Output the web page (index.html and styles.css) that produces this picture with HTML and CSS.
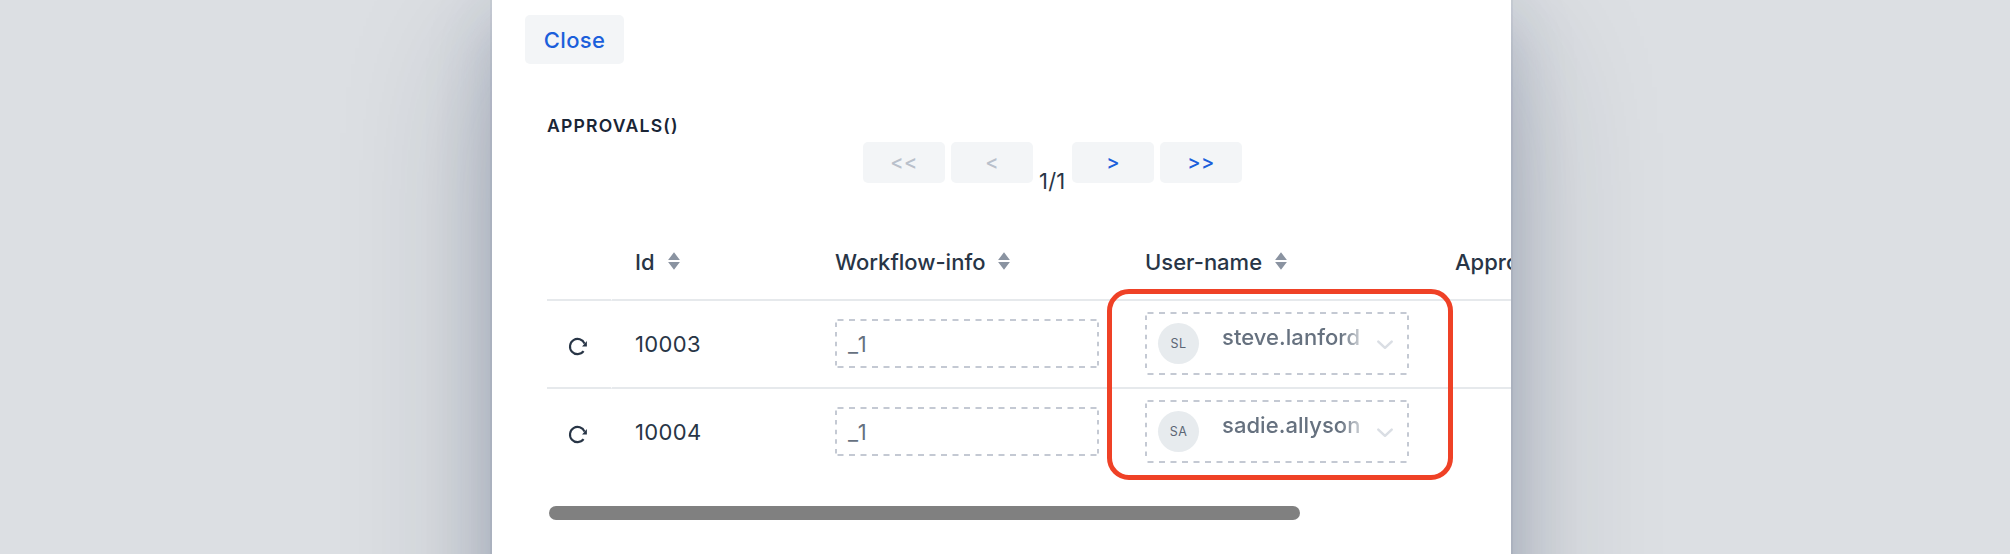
FILE: index.html
```html
<!DOCTYPE html>
<html lang="en">
<head>
<meta charset="utf-8">
<title>Approvals</title>
<link rel="stylesheet" href="styles.css">
</head>
<body>
<svg class="symbols" aria-hidden="true">
  <symbol id="reload" viewBox="0 0 20 20"><path d="M15.6 14.2A7.6 7.6 0 1 1 16.6 6.6" fill="none" stroke="currentColor" stroke-width="2.1"/><path d="M18.9 4v5.6h-4.8z" fill="currentColor"/></symbol>
  <symbol id="sort" viewBox="0 0 12 18"><path d="M6 0.3 11.9 7.9H.1zM.1 10.1h11.8L6 17.7z" fill="currentColor"/></symbol>
  <symbol id="chevron" viewBox="0 0 18 12"><path d="M2.3 2.6 9 8.8l6.7-6.2" fill="none" stroke="currentColor" stroke-width="2.5" stroke-linecap="round" stroke-linejoin="round"/></symbol>
</svg>
<div class="backdrop">
<main class="dialog">
  <button class="button close">Close</button>
  <section class="content">
    <h2 class="title">APPROVALS()</h2>
    <nav class="pager">
      <button class="button page" disabled>&lt;&lt;</button>
      <button class="button page" disabled>&lt;</button>
      <span class="count">1/1</span>
      <button class="button page">&gt;</button>
      <button class="button page">&gt;&gt;</button>
    </nav>
    <div class="grid">
      <div class="row head">
        <div class="cell first"></div>
        <div class="cell id">Id<svg class="sort"><use href="#sort"/></svg></div>
        <div class="cell">Workflow-info<svg class="sort"><use href="#sort"/></svg></div>
        <div class="cell">User-name<svg class="sort"><use href="#sort"/></svg></div>
        <div class="cell">Appro</div>
      </div>
      <div class="row">
        <div class="cell first"><svg class="reload"><use href="#reload"/></svg></div>
        <div class="cell id">10003</div>
        <div class="cell"><div class="field text"><svg class="outline" viewBox="0 0 264 49"><path class="h" d="M2.5 1h259M2.5 48h259"/><path class="v" d="M1 3.5v43M263 3.5v43"/></svg>_1</div></div>
        <div class="cell"><div class="field user"><svg class="outline" viewBox="0 0 264 63"><path class="h" d="M2.5 1h259M2.5 62h259"/><path class="v" d="M1 3.5v57M263 3.5v57"/></svg><span class="avatar">SL</span><span class="name">steve.lanford</span><svg class="chevron"><use href="#chevron"/></svg></div></div>
        <div class="cell"></div>
      </div>
      <div class="row">
        <div class="cell first"><svg class="reload"><use href="#reload"/></svg></div>
        <div class="cell id">10004</div>
        <div class="cell"><div class="field text"><svg class="outline" viewBox="0 0 264 49"><path class="h" d="M2.5 1h259M2.5 48h259"/><path class="v" d="M1 3.5v43M263 3.5v43"/></svg>_1</div></div>
        <div class="cell"><div class="field user"><svg class="outline" viewBox="0 0 264 63"><path class="h" d="M2.5 1h259M2.5 62h259"/><path class="v" d="M1 3.5v57M263 3.5v57"/></svg><span class="avatar">SA</span><span class="name">sadie.allyson</span><svg class="chevron"><use href="#chevron"/></svg></div></div>
        <div class="cell"></div>
      </div>
      <div class="highlight"></div>
    </div>
    <div class="scrollbar"></div>
  </section>
</main>
</div>
</body>
</html>
```
FILE: styles.css
```css
* { box-sizing: border-box; }

body {
  margin: 0;
  background: #dcdfe3;
  color: #283546;
  font: 400 22px/30px Inter, sans-serif;
  letter-spacing: 0.35px;
}

.symbols { display: none; }

.backdrop { height: 554px; overflow: hidden; }

.dialog {
  width: 1019px;
  height: 760px;
  margin-left: 492px;
  padding: 15px 0 0 33px;
  overflow: hidden;
  background: #fff;
  box-shadow:
    0 0 0 2px rgba(26, 50, 105, 0.06),
    0 16px 64px -4px rgba(26, 50, 105, 0.22),
    0 44px 144px -4px rgba(24, 39, 57, 0.24);
}

.button {
  display: block;
  border: 0;
  border-radius: 5px;
  padding: 0;
  background: #f3f5f7;
  color: #1b5fdb;
  font: inherit;
  font-weight: 500;
  letter-spacing: inherit;
}

.button:disabled { color: #b9c0cb; }

.close { width: 99px; height: 49px; }

.content { padding-left: 22px; }

.title {
  margin: 49px 0 0;
  color: #1a2536;
  font-size: 17.6px;
  font-weight: 600;
  line-height: 26px;
  letter-spacing: 1.2px;
}

.pager {
  display: flex;
  gap: 6px;
  height: 58px;
  margin: 3px 0 0 316px;
}

.page { width: 82px; height: 41px; padding-bottom: 1px; font-size: 20px; }

.count { width: 27px; margin-top: 24px; letter-spacing: 0.2px; white-space: nowrap; }

.grid { position: relative; margin-top: 23px; }

.row {
  display: grid;
  grid-template-columns: 65px 199px 310px 310px 310px;
  width: 1194px;
  height: 88px;
}

.head { height: 78px; font-weight: 500; letter-spacing: 0; }

.cell {
  display: flex;
  align-items: center;
  padding-left: 24px;
  border-bottom: 2px solid #e6e9ec;
}

.head .cell { padding-top: 2px; }

.row:nth-child(3) .cell { border-color: transparent; }

.row .id { padding-left: 23px; }

.first { padding: 6px 0 0 21px; border-right: 1px solid #fff; }

.sort { flex: none; width: 12px; height: 18px; margin: -2px 0 0 13px; color: #8a93a1; }

.reload { width: 20px; height: 20px; }

.field {
  position: relative;
  display: flex;
  align-items: center;
  width: 264px;
  height: 49px;
  margin-top: -1px;
  padding-left: 13px;
  color: #66717f;
}

.outline {
  position: absolute;
  inset: 0;
  width: 100%;
  height: 100%;
  fill: none;
  stroke: #c4c9d3;
  stroke-width: 2;
}

.h { stroke-dasharray: 6 5.5; }

.v { stroke-dasharray: 4.5 5.1; }

.text { letter-spacing: 2.2px; }

.user { height: 63px; font-weight: 500; }

.avatar {
  flex: none;
  width: 41px;
  height: 41px;
  border-radius: 50%;
  background: #e7ebee;
  color: #5c6675;
  font-size: 12.5px;
  font-weight: 400;
  line-height: 42px;
  text-align: center;
}

.name {
  flex: none;
  width: 144px;
  margin: -13px 0 0 23px;
  letter-spacing: 0.05px;
  white-space: nowrap;
  -webkit-mask-image: linear-gradient(to right, #000 118px, rgba(0, 0, 0, 0.35) 138px);
  mask-image: linear-gradient(to right, #000 118px, rgba(0, 0, 0, 0.35) 138px);
}

.chevron { flex: none; width: 18px; height: 12px; margin: 2px 0 0 10px; color: #dadee4; }

.highlight {
  position: absolute;
  left: 560px;
  top: 66px;
  width: 346px;
  height: 191px;
  border: 5px solid #ef4126;
  border-radius: 22px;
}

.scrollbar {
  width: 751px;
  height: 14px;
  margin: 29px 0 0 2px;
  border-radius: 7px;
  background: #808080;
}
```
